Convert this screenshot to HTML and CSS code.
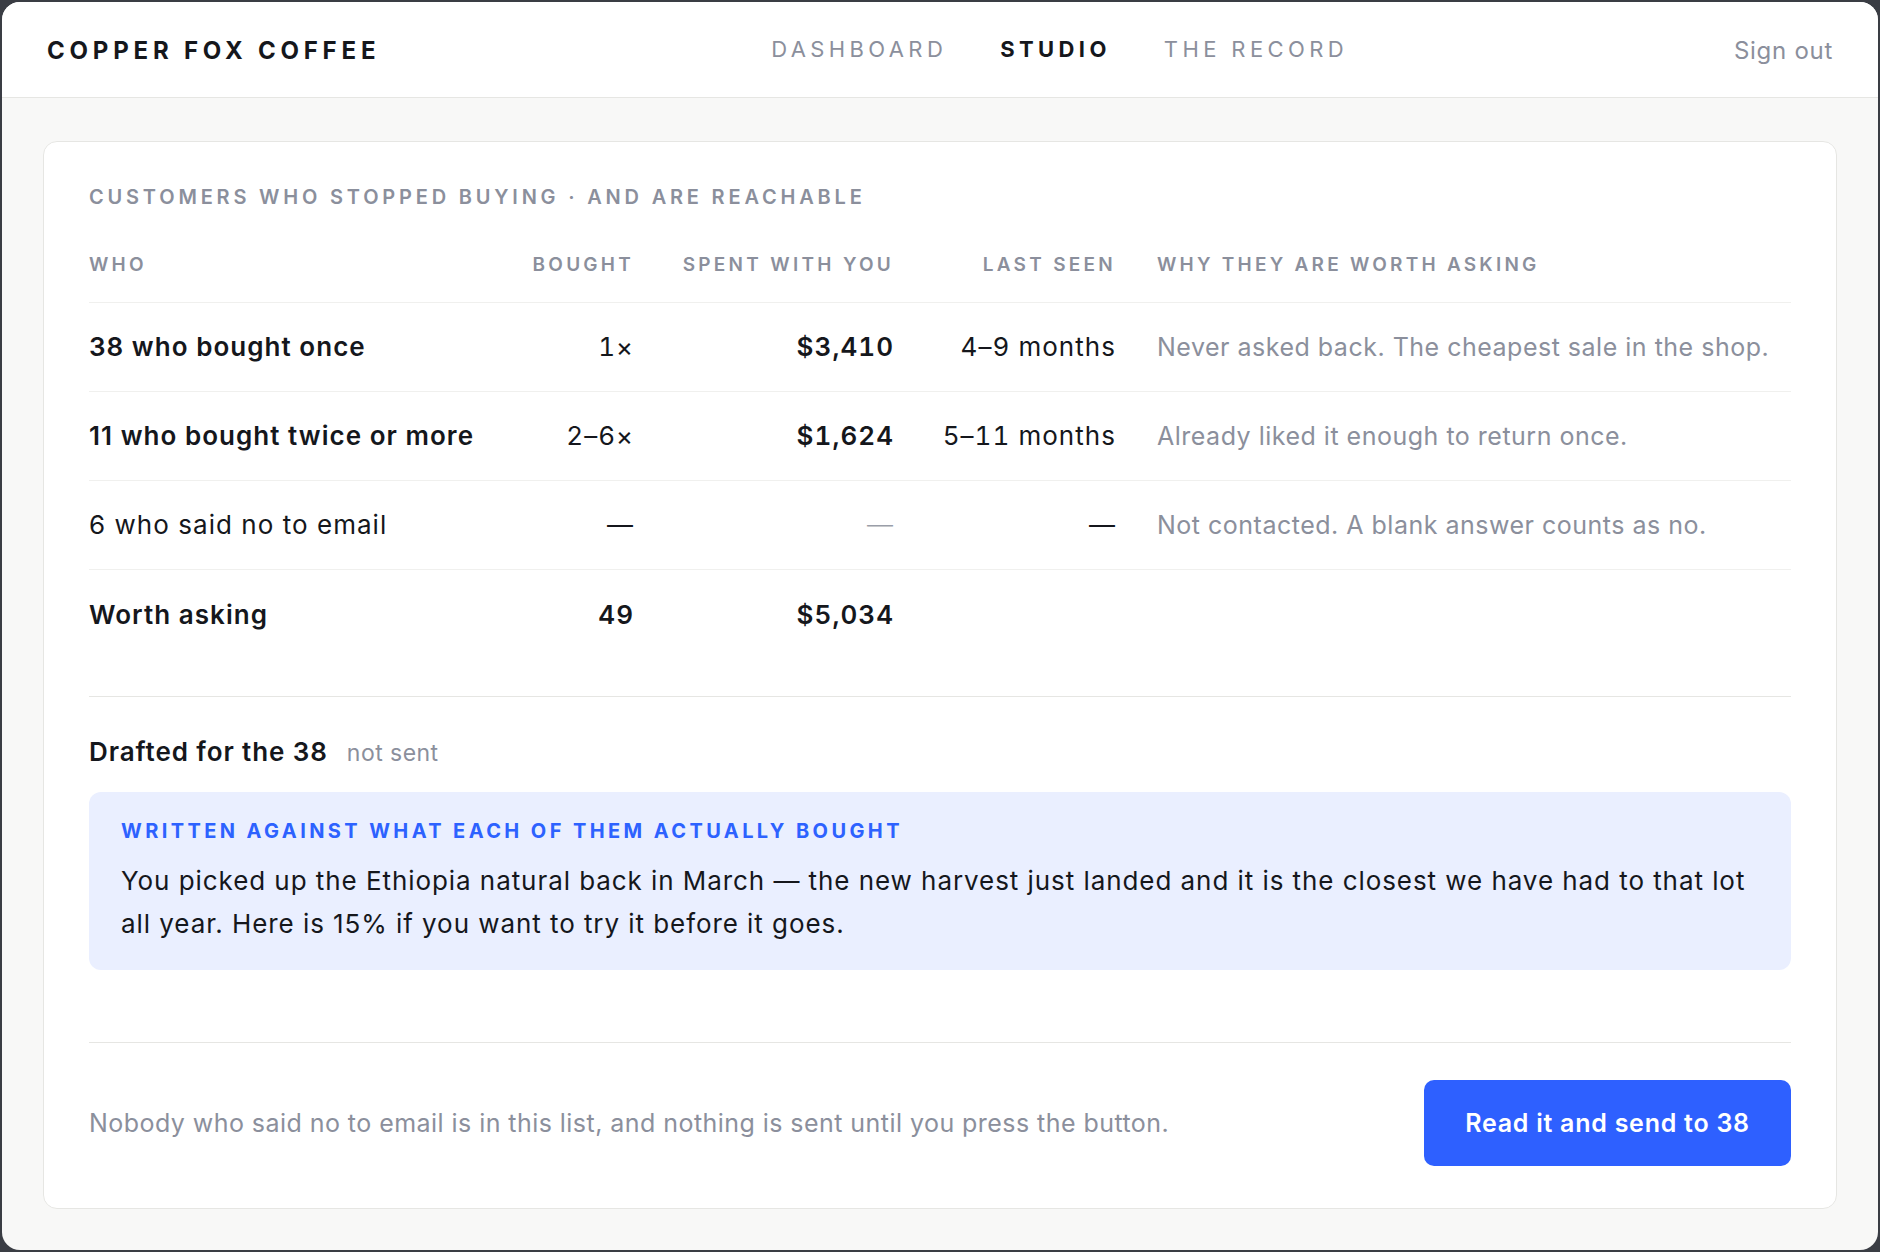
FILE: index.html
```html
<!DOCTYPE html>
<html lang="en">
<head>
<meta charset="utf-8">
<title>Copper Fox Coffee · Studio</title>
<link rel="stylesheet" href="styles.css">
</head>
<body>
<div class="window">
  <header class="topbar">
    <div class="logo">COPPER FOX COFFEE</div>
    <nav class="nav">
      <a class="nav-item">DASHBOARD</a>
      <a class="nav-item active">STUDIO</a>
      <a class="nav-item">THE RECORD</a>
    </nav>
    <a class="signout">Sign out</a>
  </header>
  <main class="main">
    <section class="card">
      <h2 class="eyebrow">CUSTOMERS WHO STOPPED BUYING · AND ARE REACHABLE</h2>
      <div class="table">
        <div class="row head">
          <div class="c">WHO</div>
          <div class="c r">BOUGHT</div>
          <div class="c r">SPENT WITH YOU</div>
          <div class="c r">LAST SEEN</div>
          <div class="c">WHY THEY ARE WORTH ASKING</div>
        </div>
        <div class="row">
          <div class="c b">38 who bought once</div>
          <div class="c r">1×</div>
          <div class="c r b">$3,410</div>
          <div class="c r">4–9 months</div>
          <div class="c why">Never asked back. The cheapest sale in the shop.</div>
        </div>
        <div class="row">
          <div class="c b">11 who bought twice or more</div>
          <div class="c r">2–6×</div>
          <div class="c r b">$1,624</div>
          <div class="c r">5–11 months</div>
          <div class="c why">Already liked it enough to return once.</div>
        </div>
        <div class="row">
          <div class="c">6 who said no to email</div>
          <div class="c r">—</div>
          <div class="c r muted">—</div>
          <div class="c r">—</div>
          <div class="c why">Not contacted. A blank answer counts as no.</div>
        </div>
        <div class="row total">
          <div class="c b">Worth asking</div>
          <div class="c r b">49</div>
          <div class="c r b">$5,034</div>
          <div class="c r"></div>
          <div class="c why"></div>
        </div>
      </div>

      <div class="draft">
        <div class="draft-head">
          <span class="draft-title">Drafted for the 38</span>
          <span class="draft-status">not sent</span>
        </div>
        <div class="message">
          <div class="message-label">WRITTEN AGAINST WHAT EACH OF THEM ACTUALLY BOUGHT</div>
          <p class="message-text">You picked up the Ethiopia natural back in March — the new harvest just landed and it is the closest we have had to that lot all year. Here is 15% if you want to try it before it goes.</p>
        </div>
      </div>

      <div class="footer">
        <p class="footnote">Nobody who said no to email is in this list, and nothing is sent until you press the button.</p>
        <button class="send">Read it and send to 38</button>
      </div>
    </section>
  </main>
</div>
</body>
</html>
```
FILE: styles.css
```css
* { box-sizing: border-box; }
html, body {
  margin: 0;
  height: 100%;
  background: #3a3d44;
}
body {
  font-family: Inter, "Noto Sans", "Liberation Sans", sans-serif;
  color: #15171c;
  padding: 2px;
}
.window {
  height: 100%;
  background: #f8f8f7;
  border-radius: 18px;
  overflow: hidden;
  display: flex;
  flex-direction: column;
}
.topbar {
  height: 96px;
  flex: none;
  background: #ffffff;
  border-bottom: 1px solid #e6e6e3;
  display: flex;
  align-items: center;
  justify-content: space-between;
  padding: 0 45px;
}
.logo {
  font-size: 24px;
  font-weight: 700;
  letter-spacing: 0.2em;
  color: #15171c;
  margin-top: 1px;
}
.nav {
  display: flex;
  gap: 53px;
  margin-top: -2px;
  margin-left: 5px;
}
.nav-item {
  font-size: 22px;
  letter-spacing: 0.2em;
  color: #8b8f9c;
}
.nav-item.active {
  color: #15171c;
  font-weight: 700;
}
.signout {
  font-size: 24px;
  letter-spacing: 0.03em;
  color: #8b8f9c;
  margin-top: 2px;
}
.main {
  flex: 1;
  padding: 43px 41px 41px;
}
.card {
  background: #ffffff;
  border: 1px solid #e6e6e3;
  border-radius: 14px;
  padding: 44px 45px 42px;
}
.eyebrow {
  margin: 0;
  font-size: 20px;
  line-height: 22px;
  font-weight: 600;
  letter-spacing: 0.19em;
  color: #8b8f9c;
}
.table { margin-top: 46px; }
.row {
  display: grid;
  grid-template-columns: 394px 110px 219px 181px 1fr;
  column-gap: 41px;
  align-items: center;
  min-height: 89px;
  border-bottom: 1px solid #f0f0ee;
  font-size: 26px;
  line-height: 30px;
  letter-spacing: 0.04em;
}
.row.head {
  min-height: 0;
  padding-bottom: 26px;
  font-size: 19px;
  line-height: 22px;
  font-weight: 600;
  letter-spacing: 0.17em;
  color: #8b8f9c;
}
.row.total { border-bottom: none; min-height: 90px; }
.c { white-space: nowrap; }
.r {
  text-align: right;
  font-variant-numeric: tabular-nums;
}
.b { font-weight: 600; }
.muted { color: #9a9ea9; font-weight: 300; }
.why {
  color: #8b8f9c;
  font-size: 25px;
  letter-spacing: 0.02em;
}
.draft {
  margin-top: 36px;
  border-top: 1px solid #e6e6e3;
  padding-top: 39px;
}
.draft-head {
  display: flex;
  align-items: baseline;
  gap: 19px;
  line-height: 32px;
}
.draft-title {
  font-size: 26px;
  font-weight: 600;
  letter-spacing: 0.035em;
}
.draft-status {
  font-size: 23px;
  letter-spacing: 0.02em;
  color: #8b8f9c;
}
.message {
  margin-top: 23px;
  background: #eaefff;
  border-radius: 12px;
  padding: 28px 32px 25px;
}
.message-label {
  font-size: 20px;
  line-height: 22px;
  font-weight: 700;
  letter-spacing: 0.17em;
  color: #2d62ff;
}
.message-text {
  margin: 17px 0 0;
  font-size: 26px;
  line-height: 43px;
  letter-spacing: 0.036em;
  color: #15171c;
}
.footer {
  margin-top: 72px;
  border-top: 1px solid #e6e6e3;
  padding-top: 37px;
  display: flex;
  align-items: center;
  justify-content: space-between;
}
.footnote {
  margin: 0;
  font-size: 25px;
  letter-spacing: 0.018em;
  color: #8b8f9c;
}
.send {
  width: 367px;
  height: 86px;
  border: none;
  border-radius: 10px;
  background: #2e60ff;
  color: #ffffff;
  font-family: inherit;
  font-size: 25px;
  font-weight: 600;
  letter-spacing: 0.03em;
}
```
